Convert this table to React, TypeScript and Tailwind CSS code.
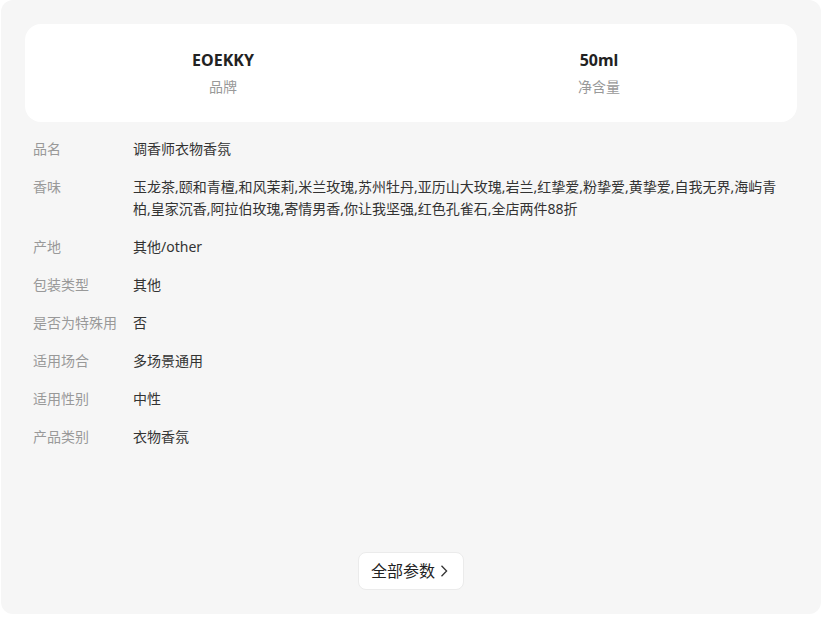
import React from "react";

const rows: { label: string; value: string }[] = [
  { label: "品名", value: "调香师衣物香氛" },
  {
    label: "香味",
    value:
      "玉龙茶,颐和青檀,和风茉莉,米兰玫瑰,苏州牡丹,亚历山大玫瑰,岩兰,红挚爱,粉挚爱,黄挚爱,自我无界,海屿青柏,皇家沉香,阿拉伯玫瑰,寄情男香,你让我坚强,红色孔雀石,全店两件88折",
  },
  { label: "产地", value: "其他/other" },
  { label: "包装类型", value: "其他" },
  { label: "是否为特殊用", value: "否" },
  { label: "适用场合", value: "多场景通用" },
  { label: "适用性别", value: "中性" },
  { label: "产品类别", value: "衣物香氛" },
];

const highlights = [
  { value: "EOEKKY", label: "品牌" },
  { value: "50ml", label: "净含量" },
];

export default function App() {
  return (
    <div
      className="w-[830px] h-[623px] bg-white pl-px"
      style={{ fontFamily: '"Noto Sans", "Noto Sans CJK SC", sans-serif' }}
    >
      <div className="w-[820px] h-[614px] bg-[#f6f6f6] rounded-xl p-6 flex flex-col">
        {/* Key params */}
        <div className="bg-white rounded-2xl px-[10px] py-[25px] grid grid-cols-2">
          {highlights.map((h) => (
            <div key={h.label} className="flex flex-col items-center">
              <div className="text-base leading-[22px] font-bold text-[#222]">{h.value}</div>
              <div className="mt-[6px] text-sm leading-5 text-[#999]">{h.label}</div>
            </div>
          ))}
        </div>

        {/* Param rows */}
        <div className="mt-4 px-2 flex flex-col gap-4">
          {rows.map((r) => (
            <div key={r.label} className="flex text-sm leading-[22px]">
              <div className="w-[100px] shrink-0 text-[#999] whitespace-nowrap">{r.label}</div>
              <div className="flex-1 text-[#333]">{r.value}</div>
            </div>
          ))}
        </div>

        {/* More button */}
        <div className="mt-auto flex justify-center">
          <button className="h-[38px] flex items-center pl-3 pr-[14px] bg-white border border-[#ebebeb] rounded-lg text-base text-[#222]">
            全部参数
            <svg width="12" height="12" viewBox="0 0 12 12" className="ml-0.5" fill="none">
              <path d="M4.5 0.8 L9.6 6 L4.5 11.2" stroke="#333" strokeWidth="1.3" />
            </svg>
          </button>
        </div>
      </div>
    </div>
  );
}
